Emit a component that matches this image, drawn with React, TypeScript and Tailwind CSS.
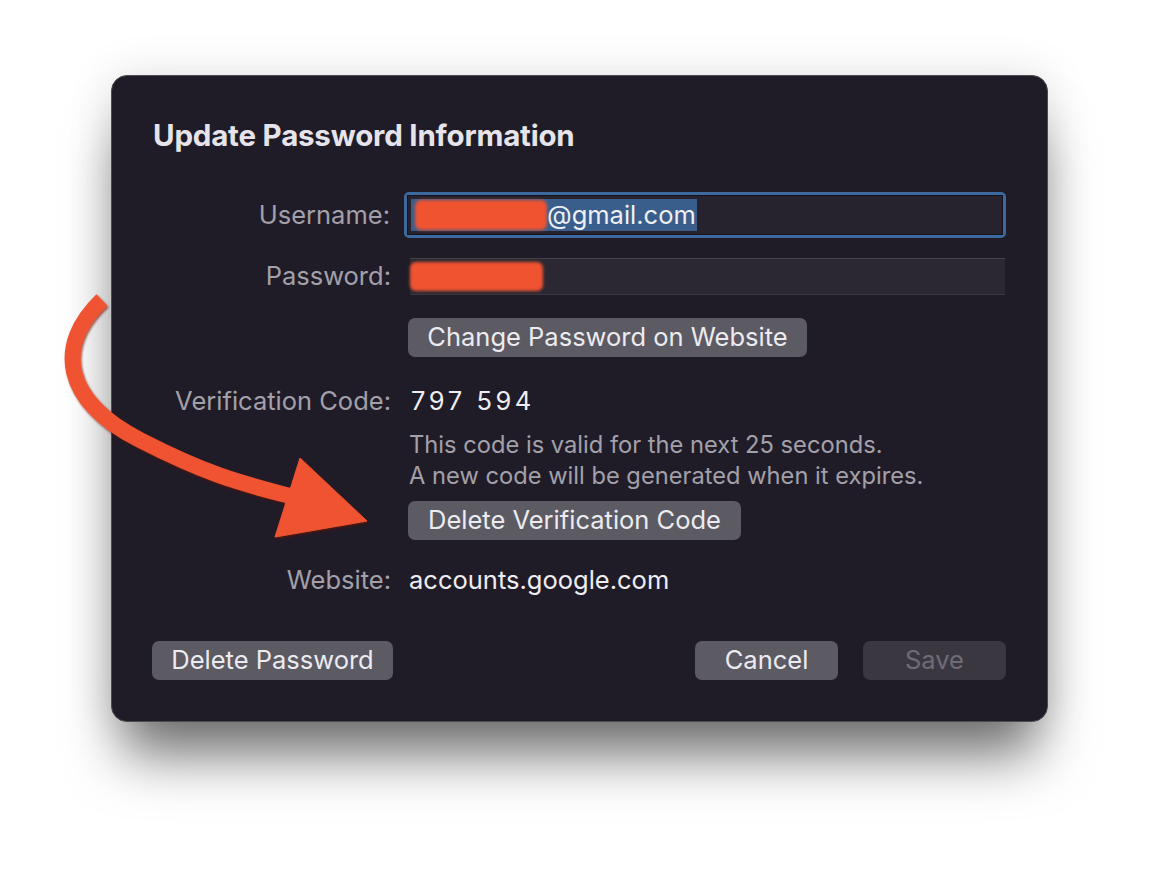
import React from 'react';

const Label: React.FC<{ children: React.ReactNode }> = ({ children }) => (
  <div className="w-[256px] shrink-0 pr-[18px] text-right text-[#a3a0aa]">{children}</div>
);

const Redact: React.FC<{ className: string }> = ({ className }) => (
  <div className={`bg-[#ef5330] rounded-[6px] blur-[1.5px] ${className}`} />
);

const Arrow: React.FC = () => (
  <svg className="absolute left-0 top-0 pointer-events-none" width="1160" height="870" viewBox="0 0 1160 870">
    <defs>
      <filter id="ds" x="-20%" y="-20%" width="140%" height="140%">
        <feDropShadow dx="1" dy="1.5" stdDeviation="0.8" floodColor="#6a1405" floodOpacity="0.7" />
      </filter>
    </defs>
    <g filter="url(#ds)" fill="#ef5330" stroke="#ef5330">
      <path d="M 102 300 C 55 345, 62 400, 140 440 S 250 485, 305 500" fill="none" strokeWidth="16" />
      <polygon points="300,458 367,521 275,537" strokeWidth="1" strokeLinejoin="miter" />
    </g>
  </svg>
);

export default function App() {
  return (
    <div className="relative w-[1160px] h-[870px] bg-white overflow-hidden font-['Inter',sans-serif]">
      <div className="pt-[75px] pl-[111px]">
        <div className="w-[937px] h-[647px] rounded-[16px] bg-[#201c27] border border-[#4d4a53] shadow-[0_45px_55px_-12px_rgba(0,0,0,0.55),0_0_45px_rgba(0,0,0,0.12)] flex flex-col pl-[41px] pr-[41px] pt-[41px] text-[25.5px]">
          <h1 className="text-[29.5px] leading-[36px] font-bold text-[#e6e4ea] tracking-[-0.2px]">Update Password Information</h1>

          <div className="mt-[39px] ml-[-1px] flex items-center h-[46px]">
            <Label>Username:</Label>
            <div className="ml-[-4px] w-[605px] h-[46px] rounded-[5px] border-[3px] border-[#3d6a9e]">
              <div className="h-full border border-[#15121b] bg-[#27232e] flex items-center pl-[3px]">
                <div className="relative h-[32px] bg-[#3a5e8b] flex items-center pl-[136px] pr-[1px] text-[#eef0f4]">
                  <Redact className="absolute left-[4px] top-[1px] w-[132px] h-[30px]" />
                  @gmail.com
                </div>
              </div>
            </div>
          </div>

          <div className="mt-[20px] flex items-center h-[37px]">
            <Label>Password:</Label>
            <div className="ml-[1px] w-[595px] h-[37px] bg-[#2b2832] border-t border-[#45424b] border-b border-b-[#3a3740] flex items-center">
              <Redact className="w-[133px] h-[29px]" />
            </div>
          </div>

          <div className="mt-[23px] flex items-center">
            <div className="w-[255px] shrink-0" />
            <button className="w-[399px] h-[39px] rounded-[7px] bg-[#5c5a63] text-[#ecebef] text-center">Change Password on Website</button>
          </div>

          <div className="mt-[27px] flex items-center h-[34px]">
            <Label>Verification Code:</Label>
            <div className="pl-[2px] text-[#eeedf1] tracking-[0.14em]">797 594</div>
          </div>

          <div className="mt-[11px] flex">
            <div className="w-[256px] shrink-0" />
            <div className="text-[23.7px] leading-[31px] text-[#a3a0aa]">
              <div>This code is valid for the next 25 seconds.</div>
              <div>A new code will be generated when it expires.</div>
            </div>
          </div>

          <div className="mt-[10px] flex items-center">
            <div className="w-[255px] shrink-0" />
            <button className="w-[333px] h-[39px] rounded-[7px] bg-[#5c5a63] text-[#ecebef] text-center">Delete Verification Code</button>
          </div>

          <div className="mt-[23px] flex items-center h-[34px]">
            <Label>Website:</Label>
            <div className="text-[#eeedf1]">accounts.google.com</div>
          </div>

          <div className="mt-[44px] ml-[-1px] flex items-center">
            <button className="w-[241px] h-[39px] rounded-[7px] bg-[#5c5a63] text-[#ecebef]">Delete Password</button>
            <div className="flex-1" />
            <button className="w-[143px] h-[39px] rounded-[7px] bg-[#5c5a63] text-[#ecebef]">Cancel</button>
            <button className="ml-[25px] w-[143px] h-[39px] rounded-[7px] bg-[#3a3741] text-[#6f6c75]">Save</button>
          </div>
        </div>
      </div>
      <Arrow />
    </div>
  );
}
